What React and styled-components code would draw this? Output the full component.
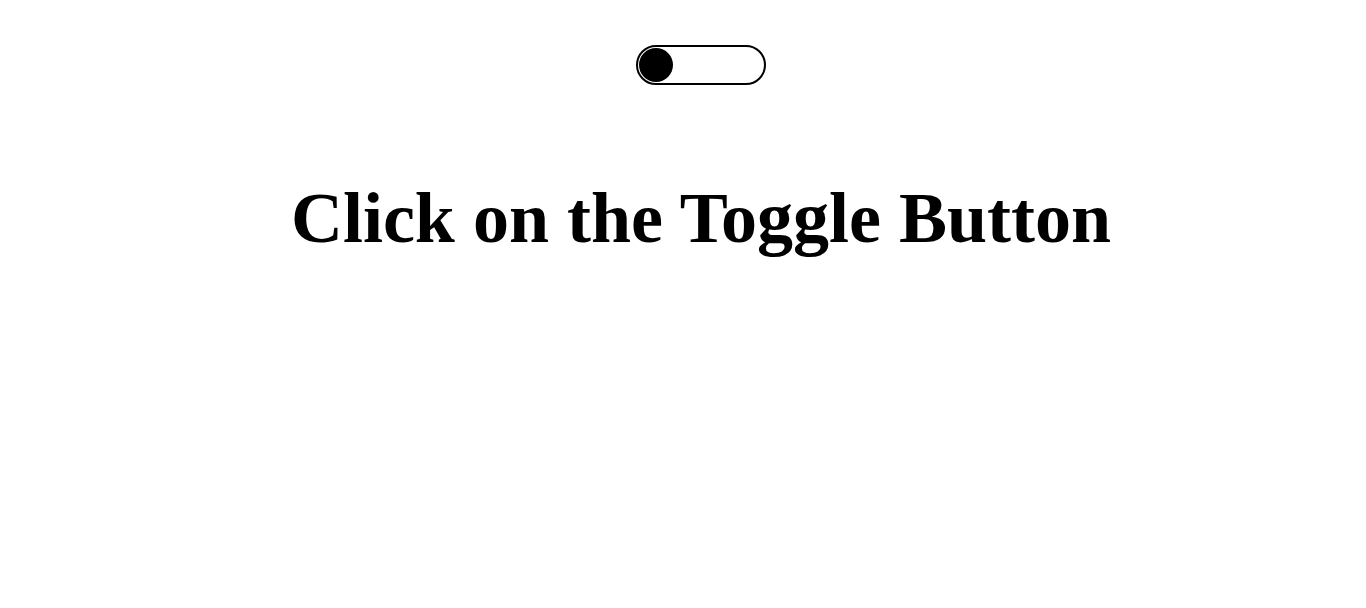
import React, { useState } from 'react'
import styled, { createGlobalStyle } from 'styled-components'

const GlobalStyle = createGlobalStyle`
    body {
        margin: 0;
        background: #fff;
        font-family: "Liberation Serif", "Times New Roman", serif;
    }
`;

const Page = styled.div`
    display: flex;
    flex-direction: column;
    align-items: center;
    padding: 45px 0 40px 36px;
`;

const Switch = styled.button`
    width: 130px;
    height: 40px;
    padding: 0 1px;
    border: 2px solid #000;
    border-radius: 20px;
    background: ${props => props.on ? "#000" : "#fff"};
    display: flex;
    align-items: center;
    justify-content: ${props => props.on ? "flex-end" : "flex-start"};
    cursor: pointer;
    box-sizing: border-box;
`;

const Knob = styled.span`
    width: 34px;
    height: 34px;
    border-radius: 50%;
    background: ${props => props.on ? "#fff" : "#000"};
`;

const Title = styled.h1`
    margin: 92px 0 0;
    font-size: 72px;
    font-weight: bold;
    line-height: normal;
    color: #000;
`;

function App() {
    const [on, setOn] = useState(false);

    return (
        <>
            <GlobalStyle />
            <Page>
                <Switch on={on ? 1 : 0} onClick={() => setOn(!on)}>
                    <Knob on={on ? 1 : 0} />
                </Switch>
                <Title>Click on the Toggle Button</Title>
            </Page>
        </>
    )
}

export default App
